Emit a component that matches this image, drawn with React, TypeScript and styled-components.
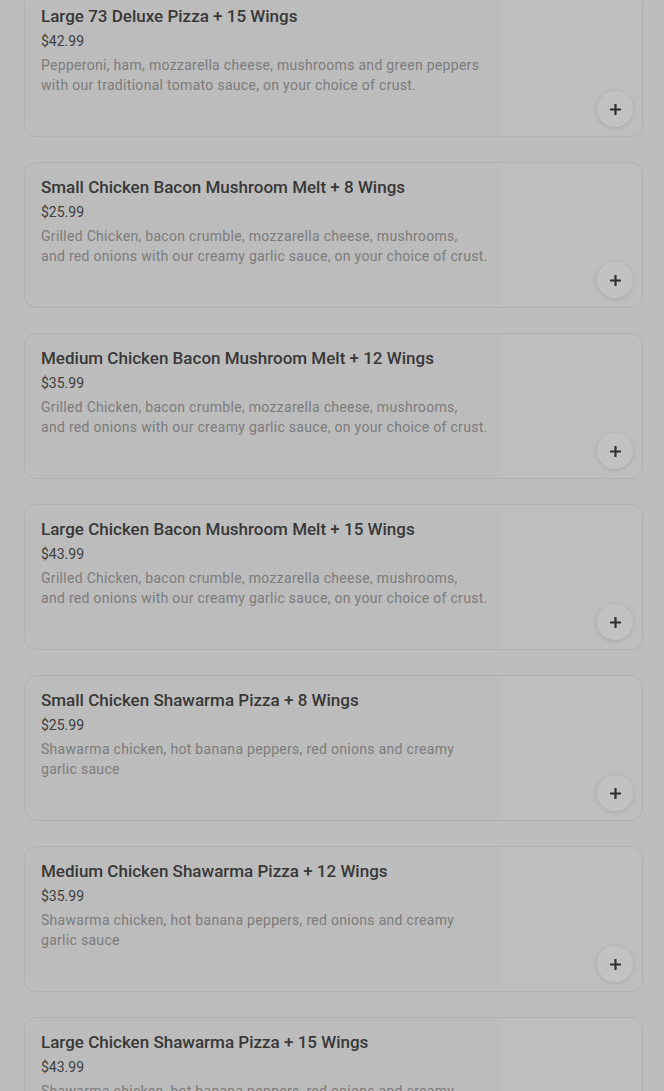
import styled, { createGlobalStyle } from "styled-components";

interface Item {
  name: string;
  price: string;
  description: string;
}

const GlobalStyle = createGlobalStyle`
  html, body {
    margin: 0;
    padding: 0;
    background: #bdbdbd;
  }
  body {
    font-family: Roboto, "Noto Sans", "Liberation Sans", sans-serif;
    overflow: hidden;
  }
`;

// nbsp keeps "and red" together so the line breaks like the real menu
const meltDescription =
  "Grilled Chicken, bacon crumble, mozzarella cheese, mushrooms, and\u00a0red onions with our creamy garlic sauce, on your choice of crust.";
const shawarmaDescription = "Shawarma chicken, hot banana peppers, red onions and creamy garlic sauce";

const items: Item[] = [
  {
    name: "Large 73 Deluxe Pizza + 15 Wings",
    price: "$42.99",
    description:
      "Pepperoni, ham, mozzarella cheese, mushrooms and green peppers with our traditional tomato sauce, on your choice of crust.",
  },
  { name: "Small Chicken Bacon Mushroom Melt + 8 Wings", price: "$25.99", description: meltDescription },
  { name: "Medium Chicken Bacon Mushroom Melt + 12 Wings", price: "$35.99", description: meltDescription },
  { name: "Large Chicken Bacon Mushroom Melt + 15 Wings", price: "$43.99", description: meltDescription },
  { name: "Small Chicken Shawarma Pizza + 8 Wings", price: "$25.99", description: shawarmaDescription },
  { name: "Medium Chicken Shawarma Pizza + 12 Wings", price: "$35.99", description: shawarmaDescription },
  { name: "Large Chicken Shawarma Pizza + 15 Wings", price: "$43.99", description: shawarmaDescription },
];

const MenuList = styled.div`
  display: flex;
  flex-direction: column;
  gap: 25px;
  margin-top: -9px;
  padding: 0 21px 0 24px;
`;

const Card = styled.div`
  display: flex;
  height: 146px;
  box-sizing: border-box;
  border: 1px solid #b1b1b1;
  border-radius: 12px;
  background: #bcbcbc;
  overflow: hidden;
  flex-shrink: 0;
`;

const Info = styled.div`
  flex: 1;
  padding: 13px 0 0 16px;
  display: flex;
  flex-direction: column;
`;

const Name = styled.div`
  font-size: 17px;
  line-height: 22px;
  font-weight: 500;
  color: #383838;
`;

const Price = styled.div`
  margin-top: 4px;
  font-size: 14px;
  line-height: 20px;
  color: #404040;
`;

const Description = styled.div`
  margin-top: 4px;
  max-width: 452px;
  font-size: 14px;
  line-height: 20px;
  letter-spacing: 0.3px;
  color: #7b7b7b;
`;

const Side = styled.div`
  width: 143px;
  background: #bebebe;
  display: flex;
  align-items: flex-end;
  justify-content: flex-end;
  padding: 0 9px 9px 0;
  box-sizing: border-box;
`;

const AddButton = styled.button`
  width: 36px;
  height: 36px;
  border-radius: 50%;
  border: none;
  padding: 0;
  background: #c2c2c2;
  box-shadow: 0 1px 5px rgba(0, 0, 0, 0.12);
  display: flex;
  align-items: center;
  justify-content: center;
  color: #2e2e2e;
`;

const PlusIcon = () => (
  <svg width="13" height="13" viewBox="0 0 13 13">
    <path d="M6.5 1v11M1 6.5h11" stroke="currentColor" strokeWidth="2.2" />
  </svg>
);

export default function App() {
  return (
    <>
      <GlobalStyle />
      <MenuList>
        {items.map((item) => (
          <Card key={item.name}>
            <Info>
              <Name>{item.name}</Name>
              <Price>{item.price}</Price>
              <Description>{item.description}</Description>
            </Info>
            <Side>
              <AddButton aria-label="Add">
                <PlusIcon />
              </AddButton>
            </Side>
          </Card>
        ))}
      </MenuList>
    </>
  );
}
